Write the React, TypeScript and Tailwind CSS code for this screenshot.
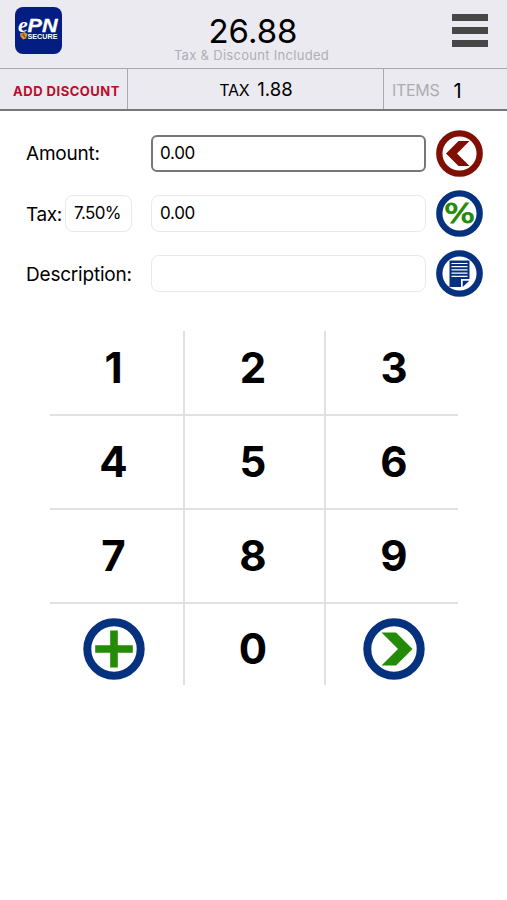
import { useState } from 'react';
import type { ReactNode } from 'react';

interface KeyCell {
  id: string;
  content: ReactNode;
}

const NAVY = '#05317f';
const GREEN = '#238b06';
const MAROON = '#7e0f02';

function Logo() {
  return (
    <svg viewBox="0 0 47 47" className="h-[47px] w-[47px]">
      <rect width="47" height="47" rx="8" fill="#031d83" />
      <text x="3" y="25" fill="#fff" fontFamily="Liberation Serif, serif" fontSize="22" fontStyle="italic" fontWeight="700">
        e
      </text>
      <text
        x="12.5"
        y="24.5"
        fill="#fff"
        fontFamily="Liberation Sans, sans-serif"
        fontSize="18.500"
        fontStyle="italic"
        fontWeight="700"
        stroke="#fff"
        strokeWidth="0.3"
        textLength="30"
        lengthAdjust="spacingAndGlyphs"
      >
        PN
      </text>
      <path d="M5 26.500l4.500-1.500 3 2-1.500 4.500-3 1-2.500-3z" fill="#d99a25" />
      <path d="M6.500 27.500l4 2M8.500 26l1 4.500" stroke="#6d4c1c" strokeWidth="0.8" />
      <text
        x="12.5"
        y="31.8"
        fill="#fff"
        fontFamily="Liberation Sans, sans-serif"
        fontSize="7.800"
        fontWeight="700"
        textLength="30"
        lengthAdjust="spacingAndGlyphs"
      >
        SECURE
      </text>
    </svg>
  );
}

function BackIcon() {
  return (
    <svg viewBox="0 0 47 47" className="h-[47px] w-[47px]">
      <circle cx="23.5" cy="23.5" r="20.200" fill="#fff" stroke={MAROON} strokeWidth="6.300" />
      <path d="M10 23.500L22.500 11H33.500L21 23.500L33.500 36H22.500z" fill={MAROON} />
    </svg>
  );
}

function PercentIcon() {
  return (
    <svg viewBox="0 0 47 47" className="h-[47px] w-[47px]">
      <circle cx="23.5" cy="23.5" r="20.200" fill="#fff" stroke={NAVY} strokeWidth="6.300" />
      <text
        x="8"
        y="33"
        fill={GREEN}
        stroke={GREEN}
        strokeWidth="0.9"
        fontFamily="DejaVu Sans, sans-serif"
        fontSize="26"
        fontWeight="400"
        textLength="31"
        lengthAdjust="spacingAndGlyphs"
      >
        %
      </text>
    </svg>
  );
}

function NoteIcon() {
  return (
    <svg viewBox="0 0 47 47" className="h-[47px] w-[47px]">
      <circle cx="23.5" cy="23.5" r="20.200" fill="#fff" stroke={NAVY} strokeWidth="6.300" />
      <path d="M13.500 10.500H33.500V29H25V37H13.500z" fill={NAVY} />
      <path d="M15.500 13.500H31.500M15.500 16.700H31.500M15.500 19.900H31.500M15.500 23.100H31.500M15.500 26.300H31.500" stroke="#fff" strokeWidth="1.200" />
      <path d="M26.700 37V30.700H33.300z" fill={NAVY} />
    </svg>
  );
}

function PlusIcon() {
  return (
    <svg viewBox="0 0 62 62" className="h-[62px] w-[62px]">
      <circle cx="31" cy="31" r="26.700" fill="#fff" stroke={NAVY} strokeWidth="8" />
      <path d="M27.200 12.500h7.600v14.700h15v7.600h-15v14.700h-7.600v-14.700h-15v-7.600h15z" fill={GREEN} />
    </svg>
  );
}

function NextIcon() {
  return (
    <svg viewBox="0 0 62 62" className="h-[62px] w-[62px]">
      <circle cx="31" cy="31" r="26.700" fill="#fff" stroke={NAVY} strokeWidth="8" />
      <path d="M18.500 14.500H33L49.500 31L33 47.500H18.500L35 31z" fill={GREEN} />
    </svg>
  );
}

const keyRows: KeyCell[][] = [
  [
    { id: '1', content: '1' },
    { id: '2', content: '2' },
    { id: '3', content: '3' },
  ],
  [
    { id: '4', content: '4' },
    { id: '5', content: '5' },
    { id: '6', content: '6' },
  ],
  [
    { id: '7', content: '7' },
    { id: '8', content: '8' },
    { id: '9', content: '9' },
  ],
  [
    { id: 'add', content: <PlusIcon /> },
    { id: '0', content: '0' },
    { id: 'next', content: <NextIcon /> },
  ],
];

const rowStyles = [
  'h-[85px] border-b-2 pb-[10px]',
  'h-[94px] border-b-2 pb-px',
  'h-[94px] border-b-2 pb-px',
  'h-[81px] pt-[9px]',
];

const columnStyles = ['w-[133px] pr-[6px]', 'w-[143px] pr-[3px]', 'w-[132px] pl-[4px]'];

function Keypad({ onPress }: { onPress: (id: string) => void }) {
  return (
    <div className="relative ml-[50px] mt-[34px] w-[408px]">
      {keyRows.map((row, rowIndex) => (
        <div key={rowIndex} className={`flex border-[#e1e1e1] ${rowStyles[rowIndex]}`}>
          {row.map((cell, columnIndex) => (
            <button
              key={cell.id}
              onClick={() => onPress(cell.id)}
              className={`flex shrink-0 items-center justify-center text-[42px] leading-none font-bold text-black ${columnStyles[columnIndex]}`}
            >
              {cell.content}
            </button>
          ))}
        </div>
      ))}
      {/* column rules run over the row rules */}
      <div className="pointer-events-none absolute inset-y-0 left-[133px] w-[143px] border-x-2 border-[#e1e1e1]" />
    </div>
  );
}

export default function App() {
  const [amount, setAmount] = useState('0.00');
  const [tax, setTax] = useState('0.00');
  const [description, setDescription] = useState('');

  const handlePress = (id: string) => {
    if (id === 'add' || id === 'next') return;
    const cents = Math.round(parseFloat(amount) * 100) * 10 + Number(id);
    setAmount((cents / 100).toFixed(2));
  };

  return (
    <div className="h-[900px] w-[507px] overflow-hidden bg-white font-['Inter',sans-serif] text-black">
      <header className="bg-[#ebeaf0]">
        <div className="flex h-[69px] justify-between border-b border-[#a9a8ad] pl-[17px] pr-[19px]">
          <div className="-ml-[2px] w-[60px] pt-[7px]">
            <Logo />
          </div>
          <div className="flex flex-col items-center pt-[14px]">
            <div className="pl-[3px] text-[33px] leading-[35px]">26.88</div>
            <div className="text-[13px] leading-[13px] tracking-[0.3px] text-[#b0afb4]">Tax &amp; Discount Included</div>
          </div>
          <button className="flex w-[60px] flex-col items-end gap-[6px] pt-[14px]">
            <span className="h-[7px] w-9 bg-[#474747]" />
            <span className="h-[7px] w-9 bg-[#474747]" />
            <span className="h-[7px] w-9 bg-[#474747]" />
          </button>
        </div>
        <div className="flex h-[42px] border-b-2 border-[#78787a]">
          <button className="w-32 whitespace-nowrap border-r border-[#a9a8ad] pl-[6px] pt-[5px] text-[13px] font-bold tracking-[0.5px] text-[#b90d2b]">
            ADD DISCOUNT
          </button>
          <div className="flex w-64 items-center justify-center gap-2 border-r border-[#a9a8ad] pl-px pt-[2px]">
            <span className="text-base tracking-[-0.3px]">TAX</span>
            <span className="text-[18.5px]">1.88</span>
          </div>
          <div className="flex items-center gap-[14px] pl-2 pt-[2px]">
            <span className="text-base tracking-[-0.3px] text-[#adacb1]">ITEMS</span>
            <span className="pt-[2px] text-xl leading-none">1</span>
          </div>
        </div>
      </header>

      <main>
        <div className="flex flex-col gap-[13px] pl-[26px] pr-6 pt-[19px]">
          <div className="flex h-[47px] items-center">
            <label className="w-[125px] pt-[2px] text-[19px] tracking-[-0.2px]">Amount:</label>
            <input
              value={amount}
              onChange={(e) => setAmount(e.target.value)}
              className="h-[37px] w-[275px] rounded-md border-2 border-[#777] px-[7px] pb-px text-[17px] tracking-[-0.3px] outline-none"
            />
            <button className="ml-[10px]">
              <BackIcon />
            </button>
          </div>
          <div className="flex h-[47px] items-center">
            <label className="w-[39px] pt-[3px] text-[19px] tracking-[-0.4px]">Tax:</label>
            <div className="mr-[19px] flex h-[37px] w-[67px] items-center rounded-lg border border-[#e9e9e9] pl-2 text-[17px] tracking-[-0.6px]">
              7.50%
            </div>
            <input
              value={tax}
              onChange={(e) => setTax(e.target.value)}
              className="h-[37px] w-[275px] rounded-lg border border-[#e9e9e9] px-2 pb-px text-[17px] tracking-[-0.3px] outline-none"
            />
            <button className="ml-[10px]">
              <PercentIcon />
            </button>
          </div>
          <div className="flex h-[47px] items-center">
            <label className="w-[125px] pt-[3px] text-[19px] tracking-[-0.2px]">Description:</label>
            <input
              value={description}
              onChange={(e) => setDescription(e.target.value)}
              className="h-[37px] w-[275px] rounded-lg border border-[#e9e9e9] px-2 text-[17px] outline-none"
            />
            <button className="ml-[10px]">
              <NoteIcon />
            </button>
          </div>
        </div>

        <Keypad onPress={handlePress} />
      </main>
    </div>
  );
}
